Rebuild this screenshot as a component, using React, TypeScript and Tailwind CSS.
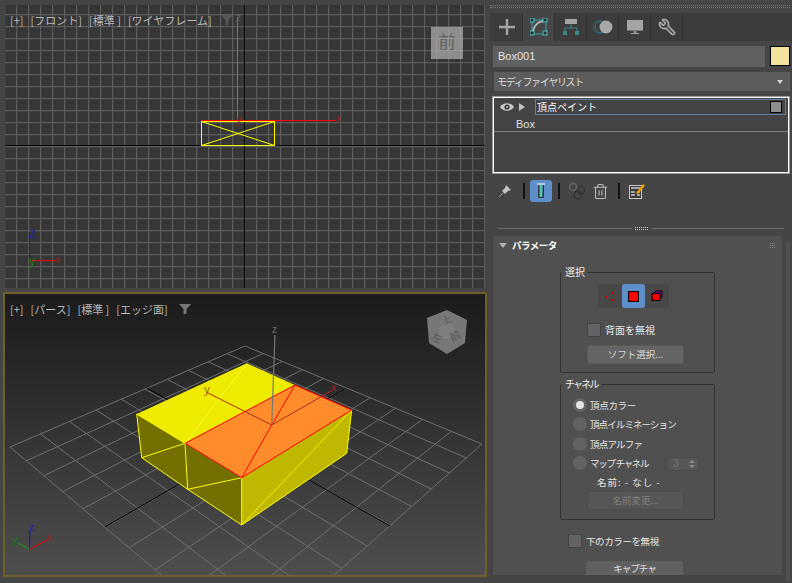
import { Trash2, Wrench } from 'lucide-react';

type Pt = [number, number];

// projective map of the unit square, used for the perspective grid
function quad(p0: Pt, p1: Pt, p2: Pt, p3: Pt) {
  const dx1 = p1[0] - p2[0];
  const dx2 = p3[0] - p2[0];
  const dy1 = p1[1] - p2[1];
  const dy2 = p3[1] - p2[1];
  const sx = p0[0] - p1[0] + p2[0] - p3[0];
  const sy = p0[1] - p1[1] + p2[1] - p3[1];
  const det = dx1 * dy2 - dx2 * dy1;
  const g = (sx * dy2 - dx2 * sy) / det;
  const h = (dx1 * sy - sx * dy1) / det;
  const a = p1[0] - p0[0] + g * p1[0];
  const b = p3[0] - p0[0] + h * p3[0];
  const d = p1[1] - p0[1] + g * p1[1];
  const e = p3[1] - p0[1] + h * p3[1];
  return (u: number, v: number): Pt => {
    const w = g * u + h * v + 1;
    return [(a * u + b * v + p0[0]) / w, (d * u + e * v + p0[1]) / w];
  };
}

const project = quad([245, 346], [482, 444], [250, 650], [10, 447]);
const steps = Array.from({ length: 11 }, (_, i) => i / 10);

function Seg({ a, b, color, w = 1 }: { a: Pt; b: Pt; color: string; w?: number }) {
  return <line x1={a[0]} y1={a[1]} x2={b[0]} y2={b[1]} stroke={color} strokeWidth={w} />;
}

function FrontScene() {
  const xs = Array.from({ length: 41 }, (_, i) => 4.7 + i * 12);
  const ys = Array.from({ length: 24 }, (_, i) => 14.7 + i * 12);
  return (
    <svg className="absolute inset-0 w-full h-full" viewBox="5 5 480 283">
      {xs.map((x) => (
        <line key={x} x1={x} y1={5} x2={x} y2={288} stroke="#646464" />
      ))}
      {ys.map((y) => (
        <line key={y} x1={5} y1={y} x2={485} y2={y} stroke="#646464" />
      ))}
      <line x1={244.5} y1={5} x2={244.5} y2={288} stroke="#000" />
      <line x1={5} y1={145.5} x2={485} y2={145.5} stroke="#000" />
      <line x1={237.5} y1={17} x2={237.5} y2={121} stroke="#7a7a7a" />
      <text x={236} y={21} fontSize={10} fill="#666">z</text>
      <rect x={201.5} y={121.5} width={73} height={24} fill="none" stroke="#ffff00" />
      <line x1={201.5} y1={121.5} x2={274.5} y2={145.5} stroke="#ffff00" />
      <line x1={201.5} y1={145.5} x2={274.5} y2={121.5} stroke="#ffff00" />
      <line x1={201} y1={120.5} x2={336} y2={120.5} stroke="#ff0000" />
      <text x={236} y={123} fontSize={11} fill="#a02020">y</text>
      <text x={336} y={122} fontSize={11} fill="#a02020">x</text>
      <line x1={29.5} y1={232} x2={29.5} y2={260} stroke="#1010e0" />
      <line x1={29} y1={260.5} x2={55} y2={260.5} stroke="#f00000" />
      <text x={29} y={238} fontSize={11} fill="#2020c0">Z</text>
      <text x={55} y={263} fontSize={11} fill="#a02020">x</text>
      <text x={29} y={265} fontSize={12} fill="#108010">y</text>
      <rect x={431} y={27} width={32} height={32} fill="#8d8d8d" />
      <text x={447} y={48} textAnchor="middle" fontSize={17} fill="#626262">前</text>
      {[436.7, 448.7, 460.7].map((x) => (
        <line key={x} x1={x} y1={27} x2={x} y2={59} stroke="#a0a0a0" strokeOpacity={0.6} />
      ))}
      {[38.7, 50.7].map((y) => (
        <line key={y} x1={431} y1={y} x2={463} y2={y} stroke="#a0a0a0" strokeOpacity={0.6} />
      ))}
    </svg>
  );
}

function PerspectiveScene() {
  return (
    <svg className="absolute inset-0 w-full h-full" viewBox="5 294 480 281">
      {steps.map((s) => (
        <g key={s}>
          <Seg a={project(s, 0)} b={project(s, 1)} color="#6e6e6e" />
          <Seg a={project(0, s)} b={project(1, s)} color="#6e6e6e" />
        </g>
      ))}
      <line x1={147} y1={388} x2={390} y2={526} stroke="#000" />
      <line x1={346} y1={388} x2={105} y2={527} stroke="#000" />

      <polygon points="136.7,414 185,443.3 187.7,489.3 141.7,457.7" fill="#737000" />
      <polygon points="185,443.3 241.7,477.7 241.7,525 187.7,489.3" fill="#737000" />
      <polygon points="241.7,477.7 351.7,410 346.7,453.3 241.7,525" fill="#c0b800" />
      <polygon points="246.7,363.3 295,385 185,443.3 136.7,414" fill="#eeea00" />
      <polygon points="295,385 351.7,410 241.7,477.7 185,443.3" fill="#ff8c2b" />
      <polyline
        points="185,443.3 136.7,414 141.7,457.7 187.7,489.3 241.7,525 346.7,453.3 351.7,410"
        fill="none"
        stroke="#ffff00"
      />
      <line x1={246.7} y1={363.3} x2={185} y2={443.3} stroke="#ffff40" strokeWidth={0.7} />
      <line x1={185} y1={443.3} x2={141.7} y2={457.7} stroke="#ffff00" />
      <line x1={185} y1={443.3} x2={187.7} y2={489.3} stroke="#ffff00" />
      <line x1={187.7} y1={489.3} x2={241.7} y2={477.7} stroke="#ffff00" />
      <line x1={241.7} y1={477.7} x2={241.7} y2={525} stroke="#ffff00" />
      <line x1={241.7} y1={525} x2={351.7} y2={410} stroke="#ffff00" strokeWidth={0.8} />
      <polygon points="295,385 351.7,410 241.7,477.7 185,443.3" fill="none" stroke="#ff0000" />
      <polyline points="295,385 271.7,425 241.7,477.7" fill="none" stroke="#ff0000" />
      <line x1={271.7} y1={425} x2={206.7} y2={392.3} stroke="#b02a20" />
      <line x1={271.7} y1={425} x2={333} y2={390} stroke="#b02a20" />
      <line x1={271.7} y1={425} x2={275} y2={335} stroke="#777" strokeWidth={1.2} />
      <text x={272} y={333} fontSize={10} fill="#6a6a6a">z</text>
      <text x={204} y={393} fontSize={11} fill="#9a5a10">y</text>
      <text x={331} y={391} fontSize={11} fill="#a02020">x</text>

      <line x1={29.7} y1={549.3} x2={29.7} y2={531} stroke="#1010e0" />
      <line x1={29.7} y1={549.3} x2={18} y2={543} stroke="#10a010" />
      <line x1={29.7} y1={549.3} x2={47} y2={540} stroke="#f00000" />
      <text x={29} y={531} fontSize={10} fill="#2020c0">z</text>
      <text x={12} y={543} fontSize={11} fill="#108010">y</text>
      <text x={47} y={541} fontSize={11} fill="#a02020">x</text>

      <polygon points="447,310 467,320 465,343 447,354 429,343 427,318" fill="#777777" />
      <circle cx={447} cy={331} r={8} fill="#7f7f7f" />
      <text x={0} y={0} fontSize={10} fill="#585858" transform="translate(443,325) rotate(-20)">上</text>
      <text x={0} y={0} fontSize={11} fill="#585858" transform="translate(430,340) rotate(20)">左</text>
      <text x={0} y={0} fontSize={11} fill="#585858" transform="translate(452,342) rotate(-28)">前</text>
    </svg>
  );
}

function FilterIcon({ color }: { color: string }) {
  return (
    <svg width="12" height="12" viewBox="0 0 12 12">
      <path d="M0 1h12L7.5 6v5h-3V6z" fill={color} />
    </svg>
  );
}

function ViewLabels({ items, filter, gap }: { items: string[]; filter: string; gap: string }) {
  return (
    <div className="absolute left-[5px] top-[8px] flex items-center gap-[7px] text-[11px] leading-[14px] text-[#b8b8b8]">
      {items.map((t) => (
        <span key={t}>{t}</span>
      ))}
      <span className={gap}>
        <FilterIcon color={filter} />
      </span>
    </div>
  );
}

function TabIcon({ kind }: { kind: string }) {
  if (kind === 'create')
    return (
      <svg width="18" height="18" viewBox="0 0 18 18">
        <path d="M9 1v16M1 9h16" stroke="#a4a4a4" strokeWidth="2.4" />
      </svg>
    );
  if (kind === 'modify')
    return (
      <svg width="18" height="18" viewBox="0 0 18 18">
        <rect x="2" y="2" width="14" height="14" fill="none" stroke="#3aa8a6" strokeWidth="1" />
        <path d="M3 15C3 8 8 3 15 3" fill="none" stroke="#b0b0b0" strokeWidth="2" />
        {[[0, 0], [13, 0], [0, 13], [13, 13]].map(([x, y]) => (
          <rect key={`${x}${y}`} x={x} y={y} width="4" height="4" fill="#2f2f2f" stroke="#46c4c0" />
        ))}
      </svg>
    );
  if (kind === 'hierarchy')
    return (
      <svg width="18" height="18" viewBox="0 0 18 18">
        <rect x="3" y="1" width="12" height="5" fill="#a4a4a4" />
        <path d="M9 6v4M3 14v-4h12v4" fill="none" stroke="#3c8080" strokeWidth="1.2" />
        <rect x="1" y="13" width="4" height="4" fill="#3a8585" />
        <rect x="13" y="13" width="4" height="4" fill="#3a8585" />
      </svg>
    );
  if (kind === 'motion')
    return (
      <svg width="20" height="14" viewBox="0 0 20 14">
        <circle cx="6" cy="7" r="6" fill="none" stroke="#2a6666" />
        <circle cx="8" cy="7" r="6" fill="none" stroke="#357a7a" />
        <circle cx="13" cy="7" r="6.5" fill="#a8a8a8" />
      </svg>
    );
  if (kind === 'display')
    return (
      <svg width="18" height="16" viewBox="0 0 18 16">
        <rect x="1" y="1" width="16" height="10" fill="#a4a4a4" />
        <rect x="1" y="11" width="16" height="1" fill="#777" />
        <rect x="7.5" y="12" width="3" height="2" fill="#888" />
        <rect x="5" y="14" width="8" height="1" fill="#a4a4a4" />
      </svg>
    );
  return <Wrench size={18} color="#a4a4a4" strokeWidth={2.4} className="-scale-x-100" />;
}

function CommandTabs() {
  const tabs = ['create', 'modify', 'hierarchy', 'motion', 'display', 'utilities'];
  return (
    <div className="mt-[5px] h-[28px] pl-px flex bg-[#3c3c3c]">
      {tabs.map((t) => (
        <div
          key={t}
          className={`w-[32px] flex items-center justify-center border-r border-[#333] ${t === 'modify' ? 'bg-[#454545]' : ''}`}
        >
          <TabIcon kind={t} />
        </div>
      ))}
    </div>
  );
}

function EyeIcon() {
  return (
    <svg width="14" height="10" viewBox="0 0 14 10">
      <path d="M0 5C3 0 11 0 14 5C11 10 3 10 0 5Z" fill="#c8c8c8" />
      <circle cx="7" cy="5" r="2.6" fill="#3a3a3a" />
      <circle cx="7" cy="5" r="1" fill="#c8c8c8" />
    </svg>
  );
}

function ModifierStack() {
  return (
    <div className="mt-[6px] mx-[3px] h-[76px] border border-white outline outline-[#9a9a9a] bg-[#444]">
      <div className="h-[17px] flex items-center">
        <span className="ml-[4px] w-[17px] flex justify-center">
          <EyeIcon />
        </span>
        <span className="ml-[4px] w-0 h-0 border-y-[4px] border-y-transparent border-l-[6px] border-l-[#c4c4c4]" />
        <div className="ml-[10px] mr-[2px] flex-1 h-[16px] border border-[#5f7fa8] flex items-center justify-between pl-px pr-[3px]">
          <span className="text-[10px] text-white leading-[14px]">頂点ペイント</span>
          <span className="w-[12px] h-[12px] bg-[#8e8e8e] border border-black" />
        </div>
      </div>
      <div className="h-[17px] border-b border-[#808080] pl-[22px] font-['Liberation_Sans',sans-serif] text-[11px] leading-[18px] text-[#e0e0e0]">
        Box
      </div>
    </div>
  );
}

function Sep({ className }: { className: string }) {
  return <span className={`block w-[2px] h-[16px] bg-[#111] ${className}`} />;
}

function StackToolbar() {
  return (
    <div className="mt-[7px] h-[22px] pl-[8px] flex items-center">
      <svg width="14" height="14" viewBox="0 0 14 14">
        <path d="M8 1l5 5-3 1-2 2-1 1-3-3 1-1 2-2z" fill="#c4c4c4" />
        <path d="M5 9l-4 4" stroke="#9a9a9a" />
      </svg>
      <Sep className="ml-[11px]" />
      <span className="ml-[5px] w-[22px] h-[22px] rounded-[3px] bg-[#5f8fca] flex items-center justify-center">
        <svg width="10" height="16" viewBox="0 0 10 16">
          <path d="M1 1h8" stroke="#ddd" strokeWidth="1.4" />
          <rect x="2" y="2" width="6" height="13" rx="1" fill="#333" />
          <rect x="3.5" y="2" width="3" height="12" fill="#4cc4c0" />
        </svg>
      </span>
      <Sep className="ml-[6px]" />
      <svg className="ml-[8px]" width="18" height="18" viewBox="0 0 18 18">
        <circle cx="5" cy="5" r="3.5" fill="none" stroke="#666" strokeWidth="1.5" />
        <circle cx="13" cy="8" r="3.5" fill="none" stroke="#333" strokeWidth="1.5" />
        <circle cx="10" cy="13" r="4" fill="none" stroke="#333" strokeWidth="1.5" />
      </svg>
      <Trash2 className="ml-[6px]" size={17} color="#bcbcbc" strokeWidth={1.5} />
      <Sep className="ml-[9px]" />
      <svg className="ml-[9px]" width="16" height="16" viewBox="0 0 16 16">
        <rect x="0.5" y="2.5" width="12" height="13" fill="#3c3c3c" stroke="#c8c8c8" />
        <path d="M2 5h9M2 9h4M2 12h4M8 9h3M8 12h3" stroke="#c8c8c8" strokeWidth="1.6" />
        <path d="M7 10L14 1l2 1.5L9 11z" fill="#f0a000" />
      </svg>
    </div>
  );
}

function Radio({ on, label, track }: { on?: boolean; label: string; track: string }) {
  return (
    <div className="h-[19.5px] flex items-center">
      <span className="ml-[12px] w-[14px] h-[14px] rounded-full bg-[#636363] flex items-center justify-center">
        {on && <span className="w-[8px] h-[8px] rounded-full bg-[#e4e4e4]" />}
      </span>
      <span className={`ml-[3px] text-[9.5px] leading-[14px] text-[#e6e6e6] ${track}`}>{label}</span>
    </div>
  );
}

function Check({ label, className }: { label: string; className: string }) {
  return (
    <div className="flex items-center">
      <span className="w-[14px] h-[14px] bg-[#636363] border border-[#444]" />
      <span className={`ml-[4px] leading-[14px] text-[#e6e6e6] ${className}`}>{label}</span>
    </div>
  );
}

function Group({
  title,
  track,
  h,
  top,
  children,
}: {
  title: string;
  track: string;
  h: string;
  top: string;
  children: React.ReactNode;
}) {
  return (
    <div className={`relative ml-[67px] w-[155px] border border-[#333] rounded-[2px] ${h} ${top}`}>
      <span className={`absolute -top-[8px] left-px px-[3px] bg-[#505050] text-[10px] leading-[14px] text-[#eee] ${track}`}>
        {title}
      </span>
      {children}
    </div>
  );
}

function Rollout() {
  return (
    <div className="mt-[6px] ml-[3px] mr-[10px] h-[339px] overflow-hidden rounded-t-[2px] bg-[#505050]">
      <div className="h-[18px] flex items-center">
        <span className="ml-[6px] w-0 h-0 border-x-[4px] border-x-transparent border-t-[5px] border-t-[#b0b0b0]" />
        <span className="ml-[5px] text-[9.5px] font-bold tracking-[-0.5px] leading-[14px] text-white">パラメータ</span>
        <span className="ml-auto mr-[7px] grid grid-cols-3 gap-px">
          {Array.from({ length: 9 }, (_, i) => (
            <span key={i} className="w-[1px] h-[1px] bg-[#888]" />
          ))}
        </span>
      </div>
      <Group title="選択" track="" h="h-[101px]" top="mt-[18px]">
        <div className="mt-[11px] ml-[37px] flex h-[24px]">
          <span className="w-[24px] bg-[#484848] flex items-center justify-center">
            <svg width="14" height="14" viewBox="0 0 14 14">
              <rect x="9" y="3" width="2" height="2" fill="#d00000" />
              <rect x="2" y="7" width="2" height="2" fill="#d00000" />
              <rect x="8" y="10" width="2" height="2" fill="#d00000" />
            </svg>
          </span>
          <span className="w-[23px] rounded-[3px] bg-[#5f8fca] flex items-center justify-center">
            <span className="w-[11px] h-[11px] bg-[#ff0000] border border-black" />
          </span>
          <span className="w-[24px] bg-[#484848] flex items-center justify-center">
            <svg width="12" height="12" viewBox="0 0 12 12">
              <path d="M3 3l2-2h6v6l-2 2z" fill="#7a1088" stroke="#000" />
              <rect x="1" y="3.5" width="8" height="7" fill="#ff0000" stroke="#000" />
            </svg>
          </span>
        </div>
        <div className="mt-[15px] ml-[26px]">
          <Check label="背面を無視" className="text-[10px]" />
        </div>
        <div className="mt-[8px] ml-[26px] w-[97px] h-[19px] rounded-[3px] bg-[#646464] border border-[#5a5a5a] text-center text-[9.5px] leading-[17px] text-[#d8d8d8]">
          ソフト選択...
        </div>
      </Group>
      <Group title="チャネル" track="tracking-[-1.8px]" h="h-[136px]" top="mt-[11px]">
        <div className="mt-[10px]">
          <Radio on label="頂点カラー" track="tracking-[-0.3px]" />
          <Radio label="頂点イルミネーション" track="tracking-[-0.9px]" />
          <Radio label="頂点アルファ" track="tracking-[-0.8px]" />
          <div className="relative">
            <Radio label="マップ チャネル" track="tracking-[-1.3px]" />
            <div className="absolute left-[106px] top-[3px] w-[32px] h-[14px] bg-[#565656] border border-[#4a4a4a] flex items-center justify-between pl-[5px] pr-[3px]">
              <span className="font-['Liberation_Sans',sans-serif] text-[10px] text-[#757575]">3</span>
              <span className="flex flex-col gap-[2px]">
                <span className="w-0 h-0 border-x-[3px] border-x-transparent border-b-[3px] border-b-[#8a8a8a]" />
                <span className="w-0 h-0 border-x-[3px] border-x-transparent border-t-[3px] border-t-[#8a8a8a]" />
              </span>
            </div>
          </div>
        </div>
        <div className="mt-[2px] ml-[36px] text-[9.5px] tracking-[1px] leading-[14px] text-[#e6e6e6]">名前: - なし -</div>
        <div className="mt-[2px] ml-[26px] w-[97px] h-[19px] rounded-[3px] bg-[#565656] border border-[#4c4c4c] text-center text-[9.5px] leading-[17px] text-[#7e7e7e]">
          名前変更...
        </div>
      </Group>
      <div className="mt-[14px] ml-[75px]">
        <Check label="下のカラーを無視" className="text-[9.5px] tracking-[-0.4px]" />
      </div>
      <div className="mt-[13px] ml-[93px] w-[97px] h-[19px] rounded-[3px] bg-[#606060] text-center text-[9.5px] tracking-[-1px] leading-[15px] text-[#e0e0e0]">
        キャプチャ
      </div>
    </div>
  );
}

export default function App() {
  return (
    <div className="w-[792px] h-[583px] flex overflow-hidden bg-[#454545] font-['Noto_Sans_CJK_JP','Liberation_Sans',sans-serif]">
      <div className="w-[490px] shrink-0 pl-[3px] pt-[5px]">
        <div className="relative ml-[2px] w-[480px] h-[283px] overflow-hidden bg-[#363636]">
          <FrontScene />
          <ViewLabels items={['[+]', '[フロント]', '[標準 ]', '[ワイヤフレーム]']} filter="#555555" gap="ml-[2px]" />
        </div>
        <div className="relative mt-[4px] w-[484px] h-[285px] border-2 border-[#6f5f2b] overflow-hidden bg-linear-to-b from-[#1b1b1b] to-[#4e4e4e]">
          <PerspectiveScene />
          <ViewLabels items={['[+]', '[パース]', '[標準 ]', '[エッジ面]']} filter="#777777" gap="ml-[4px]" />
        </div>
      </div>
      <div className="flex-1 min-w-0">
        <div className="mt-[5px] h-[3px] mr-[2px] border-y border-dotted border-[#777]" />
        <CommandTabs />
        <div className="mt-[5px] pl-[3px] pr-[2px] flex gap-[5px]">
          <div className="w-[272px] h-[21px] bg-[#606060] pl-[5px] font-['Liberation_Sans',sans-serif] text-[11px] leading-[21px] text-[#e4e4e4]">
            Box001
          </div>
          <span className="w-[20px] h-[20px] bg-[#f4e39c] border border-black" />
        </div>
        <div className="mt-[5px] ml-[4px] mr-[2px] h-[19px] bg-[#5c5c5c] flex items-center justify-between pl-[3px] pr-[7px]">
          <span className="text-[10px] tracking-[-1.3px] leading-[14px] text-[#dedede]">モディファイヤリスト</span>
          <span className="w-0 h-0 border-x-[3.5px] border-x-transparent border-t-[4px] border-t-[#d8d8d8]" />
        </div>
        <ModifierStack />
        <StackToolbar />
        <div className="mt-[25px] px-[8px] h-[3px] flex items-center gap-[3px]">
          <span className="flex-1 h-px bg-[#6a6a6a]" />
          <span className="w-[13px] h-[3px] border-y border-dotted border-[#c4c4c4]" />
          <span className="flex-1 h-px bg-[#6a6a6a]" />
        </div>
        <div className="relative">
          <Rollout />
          <span className="absolute right-[2px] top-[6px] w-[4px] h-[339px] rounded-t-[2px] bg-[#505050]" />
        </div>
      </div>
    </div>
  );
}
